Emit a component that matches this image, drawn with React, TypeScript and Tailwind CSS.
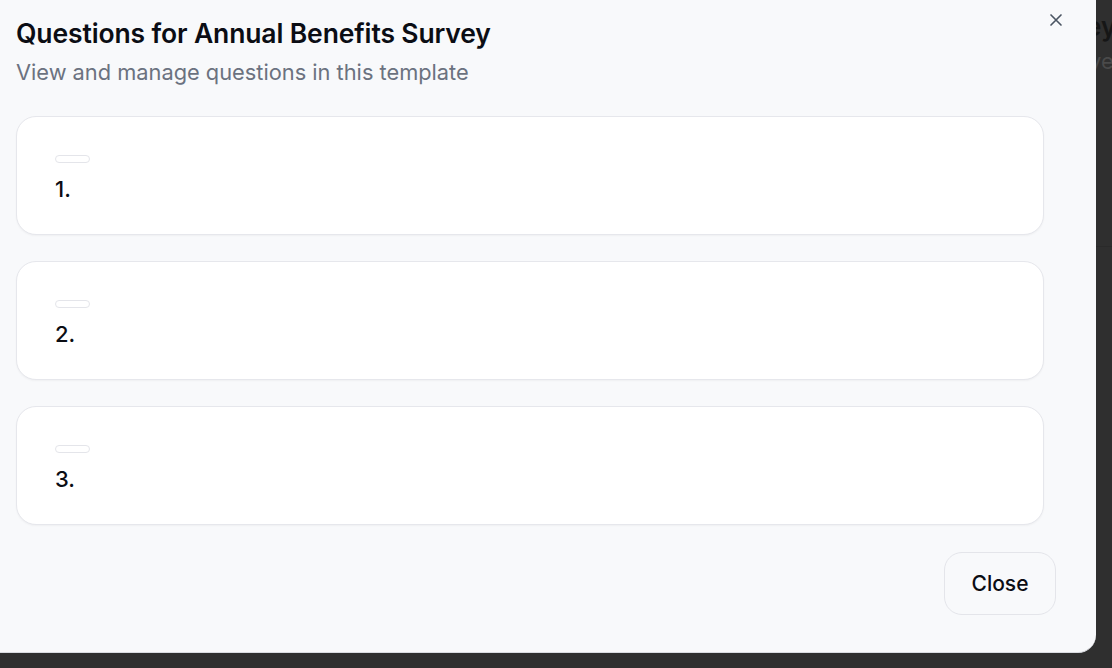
import React from "react";

const questions = [1, 2, 3];

export default function App() {
  return (
    <div
      className="relative w-[1112px] h-[668px] overflow-hidden bg-[#2f2f2f]"
      style={{ fontFamily: "Inter, 'Noto Sans', sans-serif" }}
    >
      {/* page behind the overlay */}
      <div className="absolute left-[1086px] top-[14px] text-[26px] font-semibold leading-none text-[#161616]">ey</div>
      <div className="absolute left-[1089px] top-[50px] text-[22px] leading-none text-[#4a4a4a]">ye</div>
      <div className="absolute left-[1096px] right-0 top-[246px] h-px bg-[#2a2a2a]" />

      {/* dialog */}
      <div className="absolute left-0 top-0 w-[1096px] h-[653px] rounded-br-[18px] bg-[#f8f9fb] border-b border-[#d9dbe0] flex flex-col">
        <button className="absolute right-[30px] top-[10px] text-[#4b5563]">
          <svg width="20" height="20" viewBox="0 0 24 24" fill="none" stroke="currentColor" strokeWidth="2" strokeLinecap="round">
            <path d="M6 6l12 12M18 6L6 18" />
          </svg>
        </button>

        <div className="pl-4 pt-[17px]">
          <h2 className="text-[26.5px] font-semibold tracking-[-0.005em] leading-[32px] text-[#0b0d14]">
            Questions for Annual Benefits Survey
          </h2>
          <p className="mt-[9px] text-[21.8px] leading-[28px] text-[#6b7280]">
            View and manage questions in this template
          </p>
        </div>

        <div className="mt-[30px] ml-4 w-[1028px] flex flex-col gap-[26px]">
          {questions.map((n) => (
            <div
              key={n}
              className="h-[119px] rounded-[20px] border border-[#e6e7ec] bg-white shadow-[0_1px_2px_rgba(0,0,0,0.04)] pl-[38px] pt-[38px]"
            >
              <div className="w-[35px] h-[8px] rounded-full border border-[#e4e5ea]" />
              <div className="mt-[13px] text-[22px] font-medium leading-[26px] text-[#0b0d14]">{n}.</div>
            </div>
          ))}
        </div>

        <div className="mt-[27px] flex justify-end pr-[40px]">
          <button className="w-[112px] h-[63px] rounded-[18px] border border-[#e4e5ea] bg-[#f8f9fb] text-[21px] font-medium text-[#0b0d14]">
            Close
          </button>
        </div>
      </div>
    </div>
  );
}
